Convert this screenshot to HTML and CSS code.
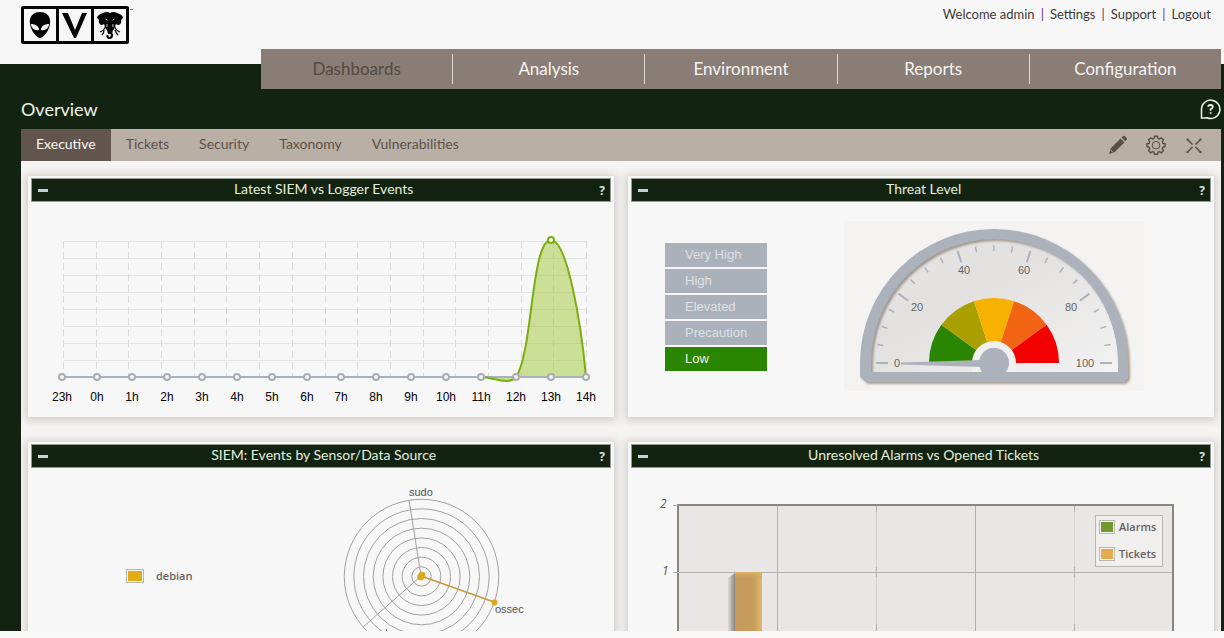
FILE: index.html
```html
<!DOCTYPE html>
<html lang="en">
<head>
<meta charset="utf-8">
<title>Overview</title>
<link rel="stylesheet" href="styles.css">
</head>
<body>
<div class="page">
  <header class="top">
    <a class="logo" href="#" aria-label="Home">
      <svg width="113" height="40" viewBox="0 0 113 40">
        <rect x="0" y="2" width="108" height="38" rx="2" fill="#050505"/>
        <path d="M3 5h32v32H3zM38 5h32v32H38zM73 5h32v32H73z" fill="#f8f7f7"/>
        <path d="M19 8C11 8 8 14 9 20c1 7 6 13 10 14 4-1 9-7 10-14 1-6-2-12-10-12z" fill="#050505"/>
        <path d="M10 20c4 0 8 2 8 6-4 1-8-2-8-6zM28 20c-4 0-8 2-8 6 4 1 8-2 8-6z" fill="#f8f7f7"/>
        <path d="M41 9h6l7 17 7-17h5L55 34h-2z" fill="#050505"/>
        <path d="M89 9Q86 7 82 9Q76 11 76 14L78 16Q77 19 80 21Q82 21 83 20L85 25Q87 27 87 30H91Q91 27 93 25L95 20Q96 21 98 21Q101 19 100 16L102 14Q102 11 96 9Q92 7 89 9z" fill="#050505"/>
        <path d="M89 26Q90 29 91 31Q91 34 88.500 34Q86 34 86.500 31" fill="none" stroke="#050505" stroke-width="2.200"/>
        <path d="M84.500 22Q84 26 79 28M83 26Q83 29 81 31M93.500 22Q94 26 99 28M94 26Q95 29 97 31" fill="none" stroke="#050505" stroke-width="1.300"/>
        <path d="M84.500 15l2 1M93.500 15l-2 1M86 20v3M92 20v3" stroke="#f8f7f7" stroke-width=".8"/>
        <path d="M109 5.500h3" stroke="#777"/>
      </svg>
    </a>
    <div class="user"><span>Welcome admin</span><a href="#">Settings</a><a href="#">Support</a><a href="#">Logout</a></div>
  </header>
  <nav class="main-nav">
    <a class="current" href="#">Dashboards</a><a href="#">Analysis</a><a href="#">Environment</a><a href="#">Reports</a><a href="#">Configuration</a>
  </nav>
  <div class="title-row">
    <h1>Overview</h1>
    <button class="icon-btn" aria-label="Help">
      <svg width="22" height="22" viewBox="0 0 22 22" fill="none" stroke="#f2f5ee" stroke-width="1.500">
        <path d="M2.500 20V11.500A9.200 9.200 0 1 1 8 19.700L6.500 20z"/>
        <path d="M9.200 8.700Q9.200 7 11.500 7T13.800 8.900Q13.800 10 11.600 11.200V12.700M11.600 14.200V15.800" stroke-width="1.800"/>
      </svg>
    </button>
  </div>
  <div class="tabs">
    <a class="active" href="#">Executive</a><a href="#">Tickets</a><a href="#">Security</a><a href="#">Taxonomy</a><a href="#">Vulnerabilities</a>
    <div class="tools">
      <button class="icon-btn" aria-label="Edit">
        <svg width="20" height="20" viewBox="0 0 20 20" fill="#594d45"><path d="M12.500 3.500l4 3.800L6.500 17.300 1 19l1.600-5.500zM13.500 2.500l1.500-1.300q1-.8 2.200.3l1.300 1.300q1 1.200 0 2.200l-1.200 1.300z"/><path d="M2.600 15l2.300 2.400" stroke="#b9afa5"/></svg>
      </button>
      <button class="icon-btn" aria-label="Options">
        <svg width="20" height="20" viewBox="0 0 20 20" fill="none" stroke="#594d45" stroke-width="1.400"><path d="M8.500 1.200h3l.5 2.200 1.500.6 1.900-1.200 2.100 2.100-1.200 1.900.6 1.600 2.200.4v2.900l-2.200.5-.6 1.600 1.200 1.900-2.100 2.100-1.900-1.200-1.500.6-.5 2.100h-3L8 17.200l-1.500-.6-1.900 1.200-2.100-2.100 1.200-1.900-.6-1.600-2.200-.5V8.800l2.200-.4.600-1.600-1.200-1.900 2.100-2.100L6.500 4 8 3.400z"/><circle cx="10" cy="10.200" r="3.800" stroke-width="1"/></svg>
      </button>
      <button class="icon-btn" aria-label="Full screen">
        <svg width="20" height="20" viewBox="0 0 20 20" stroke="#594d45" stroke-width="1.500"><path d="M3.500 4.500l5 5M16.500 4.500l-5 5M3.500 17l5-5M16.500 17l-5-5"/><path d="M2.500 3.500h2v2h-2zM15.500 3.500h2v2h-2zM2.500 16h2v2h-2zM15.500 16h2v2h-2z" fill="#594d45" stroke="none"/></svg>
      </button>
    </div>
  </div>
  <main class="panels">
    <section class="panel">
      <header class="bar"><button class="fold" aria-label="Collapse"></button><h2>Latest SIEM vs Logger Events</h2><button class="hint">?</button></header>
      <svg class="chart" viewBox="0 0 580 215">
        <path class="grid" d="M32 39.500H555M32 56.500H555M32 73.500H555M32 90.500H555M32 107.500H555M32 124.500H555M32 141.500H555M32 158.500H555"/>
        <path class="grid dashed" d="M32.500 39V175M65.500 39V175M97.500 39V175M130.500 39V175M163.500 39V175M195.500 39V175M228.500 39V175M261.500 39V175M294.500 39V175M326.500 39V175M359.500 39V175M392.500 39V175M424.500 39V175M457.500 39V175M490.500 39V175M522.500 39V175M555.500 39V175"/>
        <path d="M450 175C462 175 477 184 485 175C502 150 500 38 520 38C536 38 550 120 555 175z" fill="#9fc738" fill-opacity=".5"/>
        <path d="M31 175H555" stroke="#abb1b8" stroke-width="2"/>
        <path d="M450 175C462 175 477 184 485 175C502 150 500 38 520 38C536 38 550 120 555 175" fill="none" stroke="#7dac0c" stroke-width="2"/>
        <g fill="#f4f4f4" stroke="#aaaeb0" stroke-width="2">
          <circle cx="31" cy="175" r="3"/><circle cx="66" cy="175" r="3"/><circle cx="101" cy="175" r="3"/><circle cx="136" cy="175" r="3"/><circle cx="171" cy="175" r="3"/><circle cx="206" cy="175" r="3"/><circle cx="241" cy="175" r="3"/><circle cx="276" cy="175" r="3"/><circle cx="310" cy="175" r="3"/><circle cx="345" cy="175" r="3"/><circle cx="380" cy="175" r="3"/><circle cx="415" cy="175" r="3"/><circle cx="450" cy="175" r="3"/><circle cx="485" cy="175" r="3"/><circle cx="520" cy="175" r="3"/><circle cx="555" cy="175" r="3"/>
          <circle cx="520" cy="38" r="3" stroke="#7dac0c"/>
        </g>
        <g class="hours">
          <text x="31" y="199">23h</text><text x="66" y="199">0h</text><text x="101" y="199">1h</text><text x="136" y="199">2h</text><text x="171" y="199">3h</text><text x="206" y="199">4h</text><text x="241" y="199">5h</text><text x="276" y="199">6h</text><text x="310" y="199">7h</text><text x="345" y="199">8h</text><text x="380" y="199">9h</text><text x="415" y="199">10h</text><text x="450" y="199">11h</text><text x="485" y="199">12h</text><text x="520" y="199">13h</text><text x="555" y="199">14h</text>
        </g>
      </svg>
    </section>
    <section class="panel">
      <header class="bar"><button class="fold" aria-label="Collapse"></button><h2>Threat Level</h2><button class="hint">?</button></header>
      <div class="threat">
        <ul class="levels"><li>Very High</li><li>High</li><li>Elevated</li><li>Precaution</li><li class="on">Low</li></ul>
        <svg class="gauge" viewBox="0 0 300 170">
          <defs>
            <linearGradient id="dial" x2="1" y2="1"><stop offset="0" stop-color="#e6e4e3"/><stop offset=".4" stop-color="#e2e1e0"/><stop offset="1" stop-color="#f4f3f3"/></linearGradient>
            <filter id="soft" x="-10%" y="-10%" width="120%" height="120%"><feDropShadow dx="2" dy="2" stdDeviation="1" flood-color="#75655a" flood-opacity=".6"/></filter>
          </defs>
          <path d="M22 156V142A128 128 0 0 1 278 142V156z" fill="url(#dial)"/>
          <path d="M16 142A134 134 0 0 1 284 142V157L280 161H22L16 156zM27 142V151H274V142A123.500 124 0 0 0 27 142z" fill="#abb2bb" fill-rule="evenodd" filter="url(#soft)"/>
          <g fill="none" stroke="#abb2bb">
            <path stroke-width="2" d="M32 142H44M256 142H268M54.500 72.600L64.200 79.700M245.500 72.600L235.800 79.700M113.500 29.800L117.200 41.200M186.500 29.800L182.800 41.200"/>
            <path stroke-width="1.500" d="M33.500 123.500L39.400 124.500M37.800 105.500L43.500 107.400M44.900 88.400L50.200 91.100M66.600 58.600L70.800 62.800M80.600 46.500L84.200 51.400M96.400 36.900L99.200 42.200M131.500 25.500L132.500 31.400M150 24V30M168.500 25.500L167.500 31.400M203.600 36.900L200.800 42.200M219.400 46.500L215.800 51.400M233.400 58.600L229.200 62.800M255.100 88.400L249.800 91.100M262.200 105.500L256.500 107.400M266.500 123.500L260.600 124.500"/>
          </g>
          <path d="M85 142A65 65 0 0 1 97.400 103.800L150 142z" fill="#2a8500"/>
          <path d="M97.400 103.800A65 65 0 0 1 129.900 80.200L150 142z" fill="#aa9f00"/>
          <path d="M129.900 80.200A65 65 0 0 1 170.100 80.200L150 142z" fill="#f7b100"/>
          <path d="M170.100 80.200A65 65 0 0 1 202.600 103.800L150 142z" fill="#f06413"/>
          <path d="M202.600 103.800A65 65 0 0 1 215 142L150 142z" fill="#f40000"/>
          <path d="M128 142A22 22 0 0 1 172 142V151H128z" fill="#f0f0ef"/>
          <path d="M57 141.500L138 139V146L57 143.500z" fill="#abb2bb"/>
          <path d="M140 153A15 15 0 1 1 160 153z" fill="#abb2bb"/>
          <g class="dial-text"><text x="53" y="146">0</text><text x="73" y="90">20</text><text x="120" y="53">40</text><text x="180" y="53">60</text><text x="227" y="90">80</text><text x="241" y="146">100</text></g>
        </svg>
      </div>
    </section>
    <section class="panel">
      <header class="bar"><button class="fold" aria-label="Collapse"></button><h2>SIEM: Events by Sensor/Data Source</h2><button class="hint">?</button></header>
      <svg class="chart" viewBox="0 0 580 215">
        <rect x="95.500" y="101.500" width="17" height="13" fill="#f7f6f5" stroke="#b9b7b1"/>
        <rect x="97" y="103" width="14" height="10" fill="#e2ab17"/>
        <text class="key" x="125" y="112">debian</text>
        <g fill="none" stroke="#a2a19f">
          <circle cx="390.500" cy="108.500" r="9.700"/><circle cx="390.500" cy="108.500" r="19.300"/><circle cx="390.500" cy="108.500" r="29"/><circle cx="390.500" cy="108.500" r="38.600"/><circle cx="390.500" cy="108.500" r="48.300"/><circle cx="390.500" cy="108.500" r="58"/><circle cx="390.500" cy="108.500" r="67.600"/><circle cx="390.500" cy="108.500" r="77.200"/>
          <path d="M390 108L378 32M390 108L332 159"/>
          <path d="M390 108L463 134" stroke="#c49a3b" stroke-width="1.500"/>
        </g>
        <path d="M387 106l3-2.500 4 1 .5 4-3 4-4-.5-1.500-2z" fill="#dba81f"/>
        <circle cx="463.500" cy="134.500" r="3" fill="#dba81f"/>
        <path d="M355.500 161V164" stroke="#777"/>
        <g class="axis"><text x="378" y="28">sudo</text><text x="464" y="145">ossec</text></g>
      </svg>
    </section>
    <section class="panel">
      <header class="bar"><button class="fold" aria-label="Collapse"></button><h2>Unresolved Alarms vs Opened Tickets</h2><button class="hint">?</button></header>
      <svg class="chart" viewBox="0 0 580 215">
        <defs>
          <linearGradient id="gold"><stop offset="0" stop-color="#c39a5b"/><stop offset=".7" stop-color="#c59c5a"/><stop offset="1" stop-color="#e2b870"/></linearGradient>
          <linearGradient id="shade"><stop offset="0" stop-color="#dddcda"/><stop offset="1" stop-color="#8b8580"/></linearGradient>
          <linearGradient id="lid" x2="0" y2="1"><stop offset="0" stop-color="#e3b467"/><stop offset="1" stop-color="#c59c5a" stop-opacity="0"/></linearGradient>
        </defs>
        <rect x="47" y="37" width="495" height="200" fill="#e8e7e6" stroke="#8c8681" stroke-width="2"/>
        <path d="M146.500 38V215M344.500 38V215M42 104.500H541M42 37.500H47" stroke="#b2b1af"/>
        <path d="M245.500 38V215M443.500 38V215" stroke="#d2d1cf"/>
        <path d="M245.500 38V44M245.500 99V109M245.500 156V215M443.500 38V44M443.500 99V109M443.500 156V215" stroke="#b2b1af"/>
        <path d="M97 110L104 105V215H97z" fill="url(#shade)"/>
        <rect x="104" y="104" width="27" height="111" fill="url(#gold)"/><rect x="104" y="104" width="27" height="7" fill="url(#lid)"/>
        <g class="scale"><text x="29" y="40">2</text><text x="31" y="107">1</text></g>
        <rect x="464.500" y="47.500" width="67" height="51" fill="#f0efee" stroke="#b8b6b2"/>
        <g fill="#f7f6f5" stroke="#b8b6b0"><rect x="468.500" y="52.500" width="15" height="13"/><rect x="468.500" y="79.500" width="15" height="13"/></g>
        <rect x="470" y="54" width="12" height="10" fill="#71992f"/><rect x="470" y="81" width="12" height="10" fill="#e1ab50"/>
        <text class="key" x="488" y="63">Alarms</text><text class="key" x="488" y="90">Tickets</text>
      </svg>
    </section>
  </main>
</div>
</body>
</html>
```
FILE: styles.css
```css
* { box-sizing: border-box; }
body {
  margin: 0;
  background: #f9f8f8;
  font-family: Lato, "Open Sans", sans-serif;
  color: #3d3936;
}
a { color: inherit; text-decoration: none; }
button { border: 0; background: none; padding: 0; font: inherit; color: inherit; }
h1, h2 { margin: 0; font-weight: 400; }
.page {
  display: flow-root;
  height: calc(100vh - 7px);
  overflow: hidden;
  padding: 0 3px 0 21px;
  background: linear-gradient(#f8f7f7 64px, #132312 64px);
}
.top {
  display: flex;
  justify-content: space-between;
  align-items: flex-start;
  height: 49px;
  padding: 4px 10px 0 0;
}
.logo svg { display: block; }
.user { display: flex; font-size: 13px; line-height: 20px; }
.user a::before { content: "|"; margin: 0 6px; color: #6b3658; }
.main-nav {
  display: flex;
  width: 80%;
  height: 40px;
  margin-left: auto;
  background: #897d75;
  color: #f7f4f2;
  font-size: 17px;
  line-height: 30px;
}
.main-nav a {
  flex: 1;
  margin: 5px 0;
  text-align: center;
}
.main-nav a + a { border-left: 1px solid #ddd8d4; }
.main-nav .current { color: #554942; }
.title-row {
  display: flex;
  justify-content: space-between;
  align-items: center;
  height: 40px;
}
h1 { color: #f2f5ee; font-size: 18px; line-height: 24px; }
.icon-btn { display: block; }
.icon-btn svg { display: block; }
.tabs {
  display: flex;
  height: 32px;
  background: #b9afa5;
  color: #5d5149;
  font-size: 14px;
  line-height: 30px;
}
.tabs a { padding: 0 15px; }
.tabs .active { background: #62554d; color: #faf8f6; }
.tools { display: flex; align-items: center; gap: 18px; margin-left: auto; padding-right: 17px; }
.panels {
  display: grid;
  grid-template-columns: 1fr 1fr;
  gap: 25px 14px;
  padding: 15px 7px;
  background: #f5f4f3;
}
.panel {
  padding: 2px 3px 0;
  background: #f8f7f7;
  box-shadow: 0 1px 8px 2px rgba(90, 80, 75, .25);
}
.bar {
  display: flex;
  align-items: center;
  height: 24px;
  padding: 0 5px 0 6px;
  border: 1px solid #929b8c;
  background: #132312;
  color: #e4eedc;
}
.fold { width: 10px; height: 3px; background: #c3d4d8; }
.bar h2 { flex: 1; text-align: center; font-size: 14px; line-height: 18px; padding-bottom: 3px; }
.hint { font: bold 12px "Open Sans", sans-serif; color: #d5e1e3; }
.chart { display: block; width: 100%; }
.grid { fill: none; stroke: #e4e3e3; }
.dashed { stroke: #dcdbdb; stroke-dasharray: 7 4; }
.hours { font: 12px "Liberation Sans", Arial, sans-serif; text-anchor: middle; fill: #000; }
.dial-text { font: 11px "Liberation Sans", Arial, sans-serif; text-anchor: middle; fill: #666361; }
.axis { font: 11px "Liberation Sans", Arial, sans-serif; fill: #55514f; }
.key { font: 600 11px "Open Sans", sans-serif; fill: #66615d; }
.scale { font: italic 12px "Open Sans", sans-serif; fill: #5b5856; }
.threat {
  display: flex;
  align-items: flex-start;
  gap: 77px;
  min-height: 215px;
  padding: 19px 34px 0;
}
.levels {
  display: grid;
  gap: 2px;
  width: 102px;
  margin: 22px 0 0;
  padding: 0;
  list-style: none;
  font: 13px/24px "Liberation Sans", Arial, sans-serif;
}
.levels li { padding-left: 20px; background: #abb1bb; color: #dde0e4; }
.levels .on { background: #2a8500; color: #eef6e8; }
.gauge { width: 300px; background: #f4f3f2; }
```
